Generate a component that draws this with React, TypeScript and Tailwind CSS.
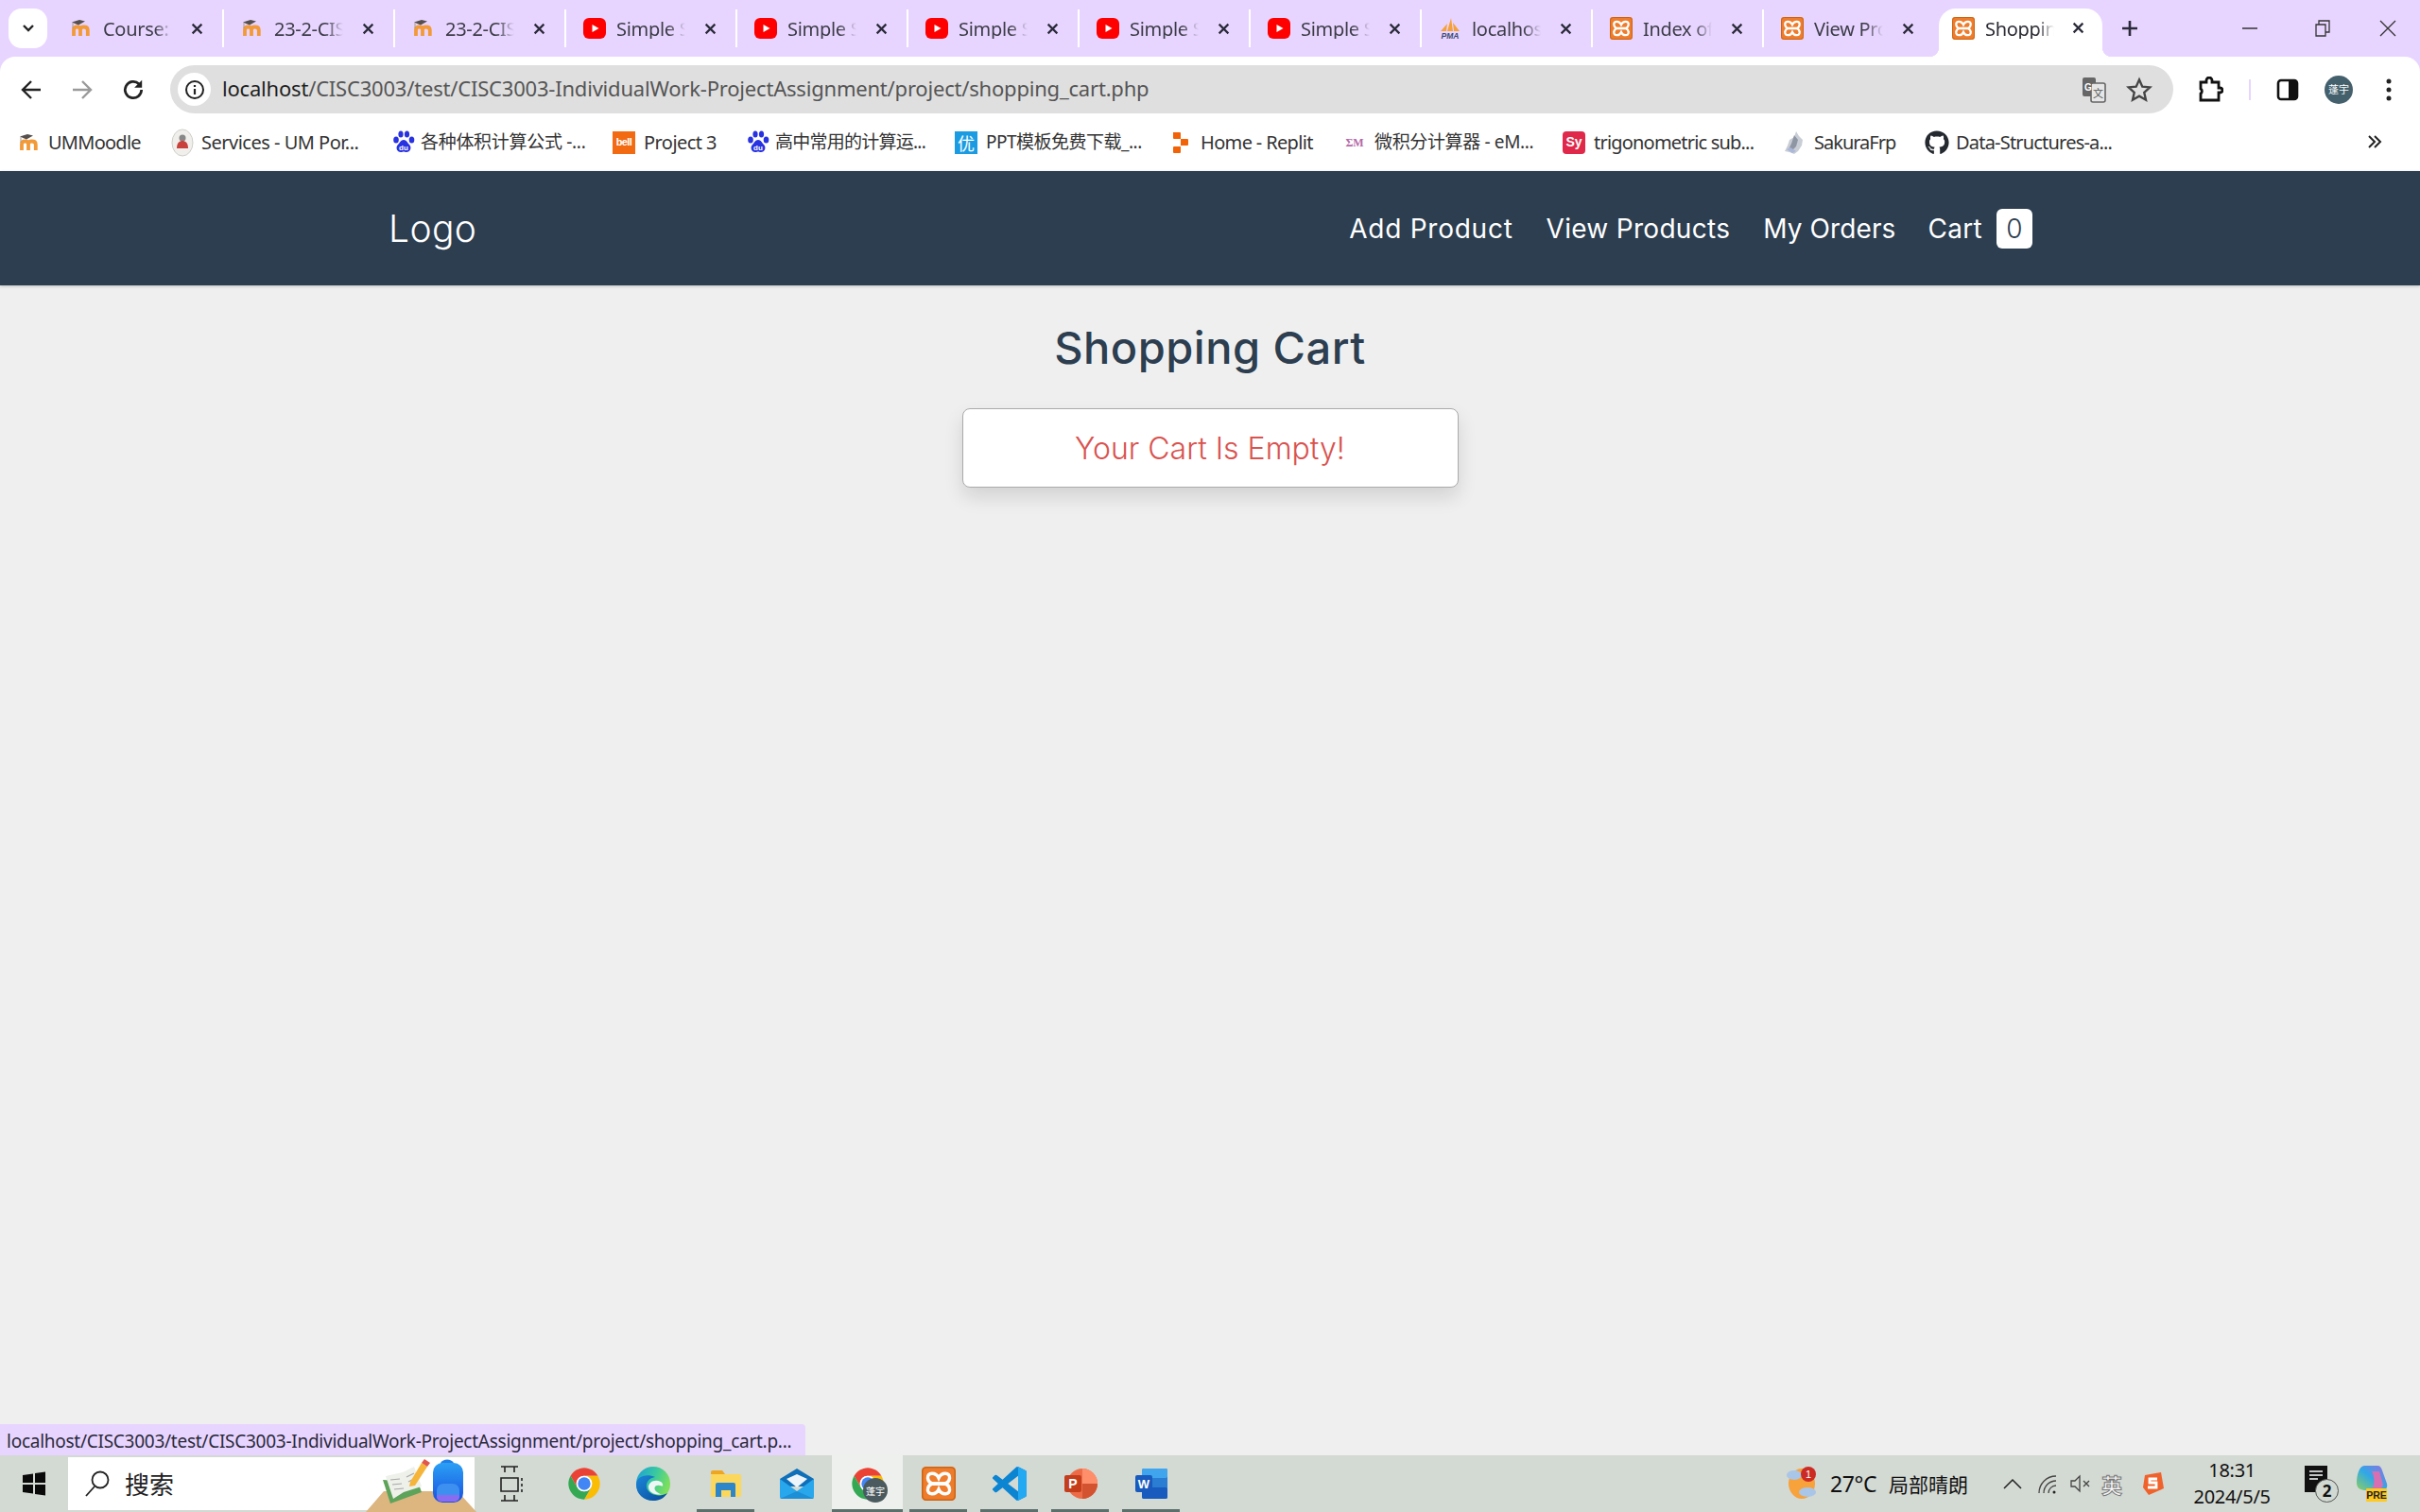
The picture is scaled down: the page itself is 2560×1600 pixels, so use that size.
import React from "react";
import { FaGithub } from "react-icons/fa";

const ui = "font-['Noto_Sans','Noto_Sans_CJK_SC',sans-serif]";

function Moodle({ s = 24 }: { s?: number }) {
  return (
    <svg width={s} height={s} viewBox="0 0 24 24" className="shrink-0">
      <path d="M4 20v-6.500c0-2 1-3 3.500-3s3.500 1 3.500 3V20M11 13.500c0-2 1.500-3 3.800-3s4 1 4 3.500V20" fill="none" stroke="#f29a38" strokeWidth="3.800" />
      <path d="M2 5.500l8-2.500 6 1.500-7 4z" fill="#55504e" />
      <path d="M3 6v6" stroke="#a89a90" strokeWidth="1" />
    </svg>
  );
}
function Yt() {
  return (
    <svg width="24" height="24" viewBox="0 0 24 24" className="shrink-0">
      <rect x="0" y="1" width="24" height="22" rx="6" fill="#ff0000" />
      <path d="M9.500 8l7 4-7 4z" fill="#fff" />
    </svg>
  );
}
function Pma() {
  return (
    <svg width="24" height="24" viewBox="0 0 24 24" className="shrink-0">
      <path d="M2 15L9 7l-1 8zM9 15l4-14 2 14zM16 15l-1-9 7 9z" fill="#f5a13a" />
      <text x="12" y="23" textAnchor="middle" fontSize="8.500" fontWeight="700" fontStyle="italic" fill="#3a4a72" fontFamily="Liberation Sans">PMA</text>
    </svg>
  );
}
function Xampp({ s = 24 }: { s?: number }) {
  return (
    <svg width={s} height={s} viewBox="0 0 24 24" className="shrink-0">
      <rect width="24" height="24" rx="3" fill="#ee7c2b" />
      <rect x=".5" y=".5" width="23" height="23" rx="3" fill="none" stroke="#c96516" />
      <path d="M12 8C10 3.500 3.800 4 4.300 8C4.500 10 6 11.500 7.500 12C6 12.500 4.500 14 4.300 16C3.800 20 10 20.500 12 16C14 20.500 20.200 20 19.700 16C19.500 14 18 12.500 16.500 12C18 11.500 19.500 10 19.700 8C20.200 4 14 3.500 12 8Z" fill="none" stroke="#fff" strokeWidth="2.300" />
      <path d="M7.500 12h9" stroke="#fff" strokeWidth="2.600" />
    </svg>
  );
}
function Paw() {
  return (
    <svg width="24" height="26" viewBox="0 0 24 26" className="shrink-0">
      <g fill="#2932e1">
        <ellipse cx="4" cy="10" rx="2.800" ry="3.600" />
        <ellipse cx="9" cy="4" rx="2.600" ry="3.600" />
        <ellipse cx="15.500" cy="4" rx="2.600" ry="3.600" />
        <ellipse cx="20.500" cy="10" rx="2.800" ry="3.600" />
        <path d="M12 10c3 0 4 3 6 5 3 3 1 8-3 8-1.500 0-2-.5-3-.5s-1.500.5-3 .5c-4 0-6-5-3-8 2-2 3-5 6-5z" />
      </g>
      <text x="12" y="21" textAnchor="middle" fontSize="8" fontWeight="700" fill="#fff" fontFamily="Liberation Sans">du</text>
    </svg>
  );
}
function Bell() {
  return (
    <div className="w-6 h-6 shrink-0 bg-[#f26a12] flex items-center justify-center text-white text-[11px] font-bold font-['Liberation_Sans',sans-serif] tracking-tighter">bell</div>
  );
}
function You() {
  return (
    <div className="w-6 h-6 shrink-0 bg-[#1b9ce2] flex items-center justify-center text-white text-[18px] leading-none font-['Noto_Sans_CJK_SC',sans-serif]">优</div>
  );
}
function Replit() {
  return (
    <svg width="21" height="24" viewBox="3 0 21 24" className="shrink-0">
      <path d="M4 1h7a1 1 0 0 1 1 1v6H5a1 1 0 0 1-1-1zM12 8h7a1 1 0 0 1 1 1v5a1 1 0 0 1-1 1h-7zM4 17a1 1 0 0 1 1-1h7v6a1 1 0 0 1-1 1H5a1 1 0 0 1-1-1z" fill="#f26207" />
    </svg>
  );
}
function Em() {
  return (
    <svg width="24" height="24" viewBox="0 0 24 24" className="shrink-0">
      <text x="12" y="16" textAnchor="middle" fontSize="12" fontWeight="700" fill="#b468a8" fontFamily="Liberation Serif">ΣM</text>
    </svg>
  );
}
function Sy() {
  return (
    <div className="w-6 h-6 shrink-0 rounded-[4px] bg-[#e0284a] flex items-center justify-center text-white text-[14px] font-bold font-['Liberation_Sans',sans-serif]">Sy</div>
  );
}
function Sakura() {
  return (
    <svg width="24" height="26" viewBox="0 0 24 26" className="shrink-0">
      <path d="M14 1l3 5 4 4-1 6-4 6-4 3-5-2-5-1 3-6 2-6 5-3z" fill="#c9ced6" />
      <path d="M12 5l4 5-2 7-5 5-3-2 3-6z" fill="#8f96a3" />
      <path d="M4 20l6 4 4-2-6-4z" fill="#aab7d8" />
    </svg>
  );
}
function Service() {
  return (
    <svg width="24" height="30" viewBox="0 0 24 30" className="shrink-0">
      <ellipse cx="12" cy="15" rx="11" ry="14" fill="#f0efec" stroke="#cfcfc9" />
      <circle cx="12" cy="10" r="3.500" fill="#888" />
      <path d="M6 21c0-6 3-8 6-8s6 2 6 8z" fill="#c9413b" />
    </svg>
  );
}
function Chrome({ s = 40 }: { s?: number }) {
  return (
    <svg width={s} height={s} viewBox="0 0 48 48" className="shrink-0">
      <path d="M6.680 14A20 20 0 0 1 41.320 14H24a10 10 0 0 0-8.660 15z" fill="#ea4335" />
      <path d="M24 14H41.320A20 20 0 0 1 24 44L32.660 29A10 10 0 0 0 24 14z" fill="#fbbc04" />
      <path d="M6.680 14L15.340 29A10 10 0 0 0 32.660 29L24 44A20 20 0 0 1 6.680 14z" fill="#34a853" />
      <circle cx="24" cy="24" r="10" fill="#fff" />
      <circle cx="24" cy="24" r="8" fill="#4285f4" />
    </svg>
  );
}
function Edge() {
  return (
    <svg width="38" height="38" viewBox="0 0 38 38" className="shrink-0">
      <defs>
        <linearGradient id="edgeA" x1="0" y1="0" x2="1" y2=".4">
          <stop offset="0" stopColor="#1a9fdc" />
          <stop offset=".55" stopColor="#38c8a0" />
          <stop offset="1" stopColor="#7ce05c" />
        </linearGradient>
        <linearGradient id="edgeB" x1="0" y1="0" x2="1" y2="1">
          <stop offset="0" stopColor="#1c86d8" />
          <stop offset="1" stopColor="#0a4a9c" />
        </linearGradient>
      </defs>
      <circle cx="19" cy="19" r="18" fill="url(#edgeA)" />
      <path d="M1 20C1 11 12 8 21 12C15 13 11 17 12 23C14 31 26 34 34 29C30 35 25 37 19 37C9 37 1 30 1 20Z" fill="url(#edgeB)" />
      <path d="M27 17C21 14 14 17 14 23C14.500 28 20 31 28 30.500C24 29 20.500 27 20.500 24C20.500 21 24 20 28 21.500C30 22 29.500 18.500 27 17Z" fill="#eef7f5" />
    </svg>
  );
}
function Folder() {
  return (
    <svg width="34" height="30" viewBox="0 0 34 30" className="shrink-0">
      <path d="M1 3a2 2 0 0 1 2-2h10l3 4H1z" fill="#eea620" />
      <rect x="1" y="5" width="32" height="24" rx="1.500" fill="#fbd75b" />
      <path d="M6 29V16a2 2 0 0 1 2-2h17a2 2 0 0 1 2 2v13h-5v-7H12v7z" fill="#2d86c9" />
    </svg>
  );
}
function Mail() {
  return (
    <svg width="38" height="34" viewBox="0 0 38 34" className="shrink-0">
      <path d="M1 12L19 1l18 11v8H1z" fill="#0f6fb8" />
      <path d="M8 12L19 7l11 5-11 9z" fill="#eef5fa" />
      <path d="M1 12l18 13 18-13v19a2 2 0 0 1-2 2H3a2 2 0 0 1-2-2z" fill="#28a7ec" />
      <path d="M1 33l18-8 18 8z" fill="#1c8fd6" />
    </svg>
  );
}
function Vscode() {
  return (
    <svg width="36" height="36" viewBox="0 0 24 24" className="shrink-0">
      <path d="M23.150 2.587L18.210.21a1.494 1.494 0 0 0-1.705.29l-9.460 8.630-4.120-3.128a.999.999 0 0 0-1.276.057L.327 7.261A1 1 0 0 0 .326 8.740L3.899 12 .326 15.260a1 1 0 0 0 .001 1.479L1.650 17.940a.999.999 0 0 0 1.276.057l4.120-3.128 9.460 8.630a1.492 1.492 0 0 0 1.704.29l4.942-2.377A1.500 1.500 0 0 0 24 20.060V3.939a1.500 1.500 0 0 0-.850-1.352zm-5.146 14.861L10.826 12l7.178-5.448v10.896z" fill="#0b84d2" />
      <path d="M16.505.5a1.494 1.494 0 0 1 1.705-.29l4.940 2.377A1.500 1.500 0 0 1 24 3.939V20.060a1.500 1.500 0 0 1-.850 1.352l-4.942 2.377a1.492 1.492 0 0 1-1.704-.29c.8.400 1.500 0 1.500-1V1.500c0-1-.7-1.400-1.500-1z" fill="#23a9f2" />
    </svg>
  );
}
function Ppt() {
  return (
    <svg width="36" height="36" viewBox="0 0 36 36" className="shrink-0">
      <circle cx="20" cy="18" r="16" fill="#ed6c47" />
      <path d="M20 2a16 16 0 0 1 16 16H20z" fill="#ff8f6b" />
      <path d="M20 18h16a16 16 0 0 1-16 16z" fill="#d35230" />
      <rect x="1" y="9" width="18" height="18" rx="2" fill="#c43e1c" />
      <text x="10" y="23" textAnchor="middle" fontSize="14" fontWeight="700" fill="#fff" fontFamily="Liberation Sans">P</text>
    </svg>
  );
}
function Word() {
  return (
    <svg width="36" height="36" viewBox="0 0 36 36" className="shrink-0">
      <rect x="8" y="2" width="27" height="32" rx="2" fill="#2b7cd3" />
      <rect x="8" y="2" width="27" height="10" rx="2" fill="#41a5ee" />
      <rect x="8" y="22" width="27" height="12" rx="2" fill="#185abd" />
      <rect x="1" y="9" width="18" height="18" rx="2" fill="#185abd" />
      <text x="10" y="23" textAnchor="middle" fontSize="13" fontWeight="700" fill="#fff" fontFamily="Liberation Sans">W</text>
    </svg>
  );
}
function Weather() {
  return (
    <svg width="40" height="36" viewBox="0 0 40 36" className="shrink-0">
      <path d="M4 18a14 16 0 0 1 14-16c8 0 14 7 14 16s-6 16-14 16S4 26 4 18z" fill="#f7a23b" />
      <g fill="#a9c6e8">
        <ellipse cx="10" cy="9" rx="8" ry="5" />
        <ellipse cx="24" cy="27" rx="9" ry="5" />
      </g>
      <circle cx="25" cy="8" r="8" fill="#cb2b22" />
      <text x="25" y="12" textAnchor="middle" fontSize="11" fill="#fff" fontFamily="Liberation Sans">1</text>
    </svg>
  );
}
function Copilot() {
  return (
    <svg width="36" height="42" viewBox="0 0 36 42" className="shrink-0">
      <defs>
        <linearGradient id="copA" x1="0" y1="1" x2="1" y2="0">
          <stop offset="0" stopColor="#8ccf5f" />
          <stop offset=".5" stopColor="#2fa8e8" />
          <stop offset="1" stopColor="#9a6be0" />
        </linearGradient>
      </defs>
      <path d="M10 2h14c3 0 4 2 5 5l5 14c1 4-1 7-5 7H12C6 28 2 26 2 20 2 12 5 2 10 2z" fill="url(#copA)" />
      <path d="M18 8h8l4 14c0 3-3 5-6 5h-6c3-4 3-14 0-19z" fill="#d76fb3" />
      <rect x="12" y="26" width="22" height="14" rx="1" fill="#ffc91f" />
      <text x="23" y="37" textAnchor="middle" fontSize="10.500" fontWeight="700" fill="#222" fontFamily="Liberation Sans">PRE</text>
    </svg>
  );
}

const X = () => (
  <svg width="13" height="13" viewBox="0 0 12 12" className="shrink-0">
    <path d="M1.500 1.500l9 9M10.500 1.500l-9 9" stroke="#2a2a3a" strokeWidth="2" />
  </svg>
);

function Tab({ icon, title }: { icon: React.ReactNode; title: string }) {
  return (
    <div className="w-[181px] h-[40px] shrink-0 flex items-center pl-[18px] pr-[20px] border-r-2 border-white">
      {icon}
      <span className="ml-[11px] pt-[2px] w-[73px] overflow-hidden whitespace-nowrap text-[20px] leading-none text-[#3c3c48] tracking-[-0.3px] [mask-image:linear-gradient(to_right,black_75%,transparent)]">{title}</span>
      <span className="ml-auto"><X /></span>
    </div>
  );
}

function Mark({ icon, text, cls, tcls }: { icon: React.ReactNode; text: string; cls: string; tcls?: string }) {
  return (
    <div className={`flex items-center gap-[9px] shrink-0 ${cls}`}>
      {icon}
      <span className={`leading-none text-[#333] whitespace-nowrap ${tcls ?? "text-[20px] tracking-[-0.55px]"}`}>{text}</span>
    </div>
  );
}

function Slot({ children, under }: { children: React.ReactNode; under?: boolean }) {
  return (
    <div className="w-[75px] h-full relative flex items-center justify-center shrink-0">
      {children}
      {under && <span className="absolute bottom-0 left-[7px] right-[7px] h-[3px] bg-[#5d6f6b]" />}
    </div>
  );
}

export default function App() {
  return (
    <div className={`w-[2560px] h-[1600px] flex flex-col overflow-hidden bg-[#efefef] ${ui}`}>
      {/* tab strip */}
      <div className="h-[60px] bg-[#e8d5ff] flex items-start shrink-0">
        <div className="w-[56px] pl-[9px] pt-[9px] shrink-0">
          <div className="w-[41px] h-[42px] bg-white rounded-[14px] flex items-center justify-center">
            <svg width="14" height="10" viewBox="0 0 14 10"><path d="M2 2l5 5 5-5" fill="none" stroke="#222" strokeWidth="2.400" /></svg>
          </div>
        </div>
        <div className="flex items-center h-[60px]">
          <Tab icon={<Moodle />} title="Course: 2" />
          <Tab icon={<Moodle />} title="23-2-CISC" />
          <Tab icon={<Moodle />} title="23-2-CISC" />
          <Tab icon={<Yt />} title="Simple Sh" />
          <Tab icon={<Yt />} title="Simple Sh" />
          <Tab icon={<Yt />} title="Simple Sh" />
          <Tab icon={<Yt />} title="Simple Sh" />
          <Tab icon={<Yt />} title="Simple Sh" />
          <Tab icon={<Pma />} title="localhost" />
          <Tab icon={<Xampp />} title="Index of /" />
          <div className="w-[185px] h-[40px] shrink-0 flex items-center pl-[18px]">
            <Xampp />
            <span className="ml-[11px] pt-[2px] w-[73px] overflow-hidden whitespace-nowrap text-[20px] leading-none text-[#3c3c48] tracking-[-0.3px] [mask-image:linear-gradient(to_right,black_75%,transparent)]">View Prod</span>
            <span className="ml-[20px]"><X /></span>
          </div>
          <div className="relative w-[173px] h-[51px] mt-[9px] shrink-0 bg-white rounded-t-[18px] flex items-center pl-[14px] pb-[10px]">
            <span className="absolute bottom-0 -left-[10px] w-[10px] h-[10px] bg-[radial-gradient(circle_at_0_0,transparent_10px,white_10.500px)]" />
            <span className="absolute bottom-0 -right-[10px] w-[10px] h-[10px] bg-[radial-gradient(circle_at_100%_0,transparent_10px,white_10.500px)]" />
            <Xampp />
            <span className="ml-[11px] pt-[2px] w-[73px] overflow-hidden whitespace-nowrap text-[20px] leading-none text-[#2b2b33] tracking-[-0.3px] [mask-image:linear-gradient(to_right,black_75%,transparent)]">Shopping</span>
            <span className="ml-[19px]"><X /></span>
          </div>
          <svg width="20" height="20" viewBox="0 0 20 20" className="ml-[19px]"><path d="M10 2v16M2 10h16" stroke="#2a2a3a" strokeWidth="2.600" /></svg>
        </div>
        <div className="ml-auto h-[40px] mt-[10px] flex items-center text-[#333]">
          <svg width="16" height="2" viewBox="0 0 16 2"><path d="M0 1h16" stroke="#333" strokeWidth="1.500" /></svg>
          <svg width="16" height="18" viewBox="0 0 16 18" className="ml-[61px]"><path d="M1 5h10v12H1zM4 5V1h11v12h-4" fill="none" stroke="#333" strokeWidth="1.300" /></svg>
          <svg width="18" height="18" viewBox="0 0 18 18" className="ml-[52px] mr-[25px]"><path d="M1 1l16 16M17 1L1 17" stroke="#333" strokeWidth="1.300" /></svg>
        </div>
      </div>

      {/* toolbar */}
      <div className="h-[60px] bg-[#e8d5ff] shrink-0">
        <div className="h-full bg-white rounded-t-[16px] flex items-start pt-[9px]">
          <div className="w-[180px] h-[51px] flex items-center shrink-0">
            <svg width="24" height="24" viewBox="0 0 24 24" className="ml-[21px]"><path d="M22 12H4M12 3l-9 9 9 9" fill="none" stroke="#222" strokeWidth="2.400" /></svg>
            <svg width="24" height="24" viewBox="0 0 24 24" className="ml-[30px]"><path d="M2 12h18M12 3l9 9-9 9" fill="none" stroke="#9a9a9a" strokeWidth="2.400" /></svg>
            <svg width="26" height="26" viewBox="0 0 24 24" className="ml-[29px]"><path d="M20 12a8 8 0 1 1-2.500-5.800" fill="none" stroke="#222" strokeWidth="2.500" /><path d="M20.500 2.500v7.500H13z" fill="#222" /></svg>
          </div>
          <div className="w-[2119px] h-[51px] bg-[#dfdfdf] rounded-full flex items-center shrink-0">
            <div className="ml-[8px] w-[35px] h-[35px] bg-white rounded-full flex items-center justify-center shrink-0">
              <svg width="22" height="22" viewBox="0 0 22 22"><circle cx="11" cy="11" r="9" fill="none" stroke="#222" strokeWidth="2" /><path d="M11 10v6M11 6v2" stroke="#222" strokeWidth="2.200" /></svg>
            </div>
            <div className="ml-[12px] pb-[3px] text-[22px] leading-none whitespace-nowrap tracking-[-0.2px] text-[#555]"><span className="text-[#1f1f1f]">localhost</span>/CISC3003/test/CISC3003-IndividualWork-ProjectAssignment/project/shopping_cart.php</div>
            <svg width="26" height="28" viewBox="0 0 26 28" className="ml-auto shrink-0">
              <rect x="1" y="1" width="14" height="20" rx="2" fill="#666" />
              <rect x="10" y="7" width="15" height="20" rx="2" fill="#e6e6e6" stroke="#666" strokeWidth="1.600" />
              <text x="7" y="15" textAnchor="middle" fontSize="10" fontWeight="700" fill="#fff" fontFamily="Liberation Sans">G</text>
              <text x="17.500" y="22" textAnchor="middle" fontSize="11" fill="#555" fontFamily="Noto Sans CJK SC">文</text>
            </svg>
            <svg width="28" height="28" viewBox="0 0 24 24" className="ml-[21px] mr-[22px] shrink-0"><path d="M12 2.800l2.800 6.300 6.900.7-5.200 4.600 1.500 6.800-6-3.500-6 3.500 1.500-6.800-5.200-4.600 6.900-.7z" fill="none" stroke="#444" strokeWidth="2" /></svg>
          </div>
          <div className="h-[51px] flex items-center flex-1">
            <svg width="26" height="28" viewBox="0 0 26 28" className="ml-[27px] shrink-0"><path d="M2 6h6V4a3 3 0 0 1 6 0v2h7v6h1.500a2.500 2.500 0 0 1 0 5H21v8H2v-7a3 3 0 0 0 0-5z" fill="none" stroke="#111" strokeWidth="2.800" /></svg>
            <span className="ml-[27px] w-[2px] h-[22px] bg-[#e8d5ff] shrink-0" />
            <svg width="24" height="24" viewBox="0 0 24 24" className="ml-[27px] shrink-0"><rect x="2" y="2" width="20" height="20" rx="3" fill="none" stroke="#111" strokeWidth="2.600" /><rect x="13" y="2" width="9" height="20" fill="#111" /></svg>
            <div className="ml-[27px] w-[30px] h-[30px] rounded-full bg-[#44606c] text-white text-[11px] flex items-center justify-center font-['Noto_Sans_CJK_SC',sans-serif] shrink-0">蓬宇</div>
            <svg width="6" height="24" viewBox="0 0 6 24" className="ml-[35px] shrink-0"><circle cx="3" cy="3" r="2.500" fill="#222" /><circle cx="3" cy="12" r="2.500" fill="#222" /><circle cx="3" cy="21" r="2.500" fill="#222" /></svg>
          </div>
        </div>
      </div>

      {/* bookmarks */}
      <div className="h-[61px] bg-white flex items-center shrink-0 pl-[19px] font-['Noto_Sans','Noto_Sans_CJK_SC',sans-serif]">
        <Mark cls="w-[162px]" icon={<Moodle />} text="UMMoodle" tcls="text-[20px] tracking-[-0.75px] -ml-[1px]" />
        <Mark cls="w-[234px]" icon={<Service />} text="Services - UM Por..." tcls="text-[20px] tracking-[-0.5px] -ml-[1px]" />
        <Mark cls="w-[233px]" icon={<Paw />} text="各种体积计算公式 -..." tcls="text-[19px] tracking-[-0.3px] -ml-[3px]" />
        <Mark cls="w-[142px]" icon={<Bell />} text="Project 3" />
        <Mark cls="w-[220px]" icon={<Paw />} text="高中常用的计算运..." tcls="text-[19px] tracking-[-0.75px] -ml-[3px]" />
        <Mark cls="w-[230px]" icon={<You />} text="PPT模板免费下载_..." tcls="text-[19px] tracking-[-0.5px]" />
        <Mark cls="w-[181px]" icon={<Replit />} text="Home - Replit" tcls="text-[20px] tracking-[-0.65px]" />
        <Mark cls="w-[232px]" icon={<Em />} text="微积分计算器 - eM..." tcls="text-[19px] tracking-[-0.35px]" />
        <Mark cls="w-[233px]" icon={<Sy />} text="trigonometric sub..." tcls="text-[20px] tracking-[-0.8px]" />
        <Mark cls="w-[150px]" icon={<Sakura />} text="SakuraFrp" tcls="text-[20px] tracking-[-1px]" />
        <Mark cls="w-[240px]" icon={<FaGithub size={26} color="#24292f" />} text="Data-Structures-a..." tcls="text-[20px] tracking-[-0.8px] -ml-[2px]" />
        <svg width="16" height="14" viewBox="0 0 16 14" className="ml-[228px] mb-[2px]"><path d="M2 1l6 6-6 6M8 1l6 6-6 6" fill="none" stroke="#222" strokeWidth="2" /></svg>
      </div>

      {/* nav */}
      <nav className="h-[121px] bg-[#2c3e50] shadow-[0_1px_3px_rgba(0,0,0,0.2)] shrink-0 font-['Inter',sans-serif] text-white">
        <div className="w-[1740px] h-full mx-auto flex items-center justify-between pl-[1px]">
          <div className="text-[39px] font-light tracking-[0.4px] pt-[1px]">Logo</div>
          <div className="flex items-center text-[28px] font-normal">
            <span className="tracking-[0.75px] pt-[1px]">Add Product</span>
            <span className="ml-[35px] tracking-[0.3px] pt-[1px]">View Products</span>
            <span className="ml-[35px] tracking-[0.1px] pt-[1px]">My Orders</span>
            <span className="ml-[34px] tracking-[0.3px] pt-[1px]">Cart</span>
            <span className="ml-[15px] w-[38px] h-[42px] bg-white rounded-[6px] text-[#2c3e50] font-light flex items-center justify-center">0</span>
          </div>
        </div>
      </nav>

      {/* page */}
      <main className="flex-1 relative flex flex-col items-center font-['Inter',sans-serif]">
        <h1 className="mt-[39px] text-[47px] leading-[54px] font-medium text-[#2c3e50] tracking-[0.5px]">Shopping Cart</h1>
        <div className="mt-[37px] w-[525px] h-[84px] bg-white border border-[#aaaaaa] rounded-[8px] shadow-[0_10px_20px_rgba(0,0,0,0.12)] flex items-center justify-center text-[32px] font-light text-[#d9534f] pt-[2px]">
          Your Cart Is Empty!
        </div>
        <div className={`absolute left-0 bottom-0 w-[852px] h-[33px] bg-[#e8d5ff] rounded-tr-[4px] pl-[7px] pt-[4px] flex items-center text-[19px] leading-none text-[#2a2a3a] whitespace-nowrap tracking-[-0.26px] ${ui}`}>
          localhost/CISC3003/test/CISC3003-IndividualWork-ProjectAssignment/project/shopping_cart.p...
        </div>
      </main>

      {/* taskbar */}
      <footer className="h-[60px] bg-[#d3d9d3] flex items-stretch shrink-0">
        <div className="w-[72px] flex items-center justify-center shrink-0">
          <svg width="26" height="26" viewBox="0 0 26 26"><path d="M1 4l11-1.600V12H1zM14 2.100L25 .5V12H14zM1 14h11v9.600L1 22zM14 14h11v11.500l-11-1.600z" fill="#0a0a0a" /></svg>
        </div>
        <div className="w-[430px] my-[2px] ml-0 bg-white flex items-center shrink-0 relative">
          <svg width="28" height="30" viewBox="0 0 28 30" className="ml-[17px]"><circle cx="17" cy="11" r="8.500" fill="none" stroke="#222" strokeWidth="1.800" /><path d="M11 18L2 28" stroke="#222" strokeWidth="1.800" /></svg>
          <span className="ml-[15px] text-[26px] leading-none text-[#222] font-['Noto_Sans_CJK_SC',sans-serif]">搜索</span>
          <svg width="120" height="60" viewBox="0 0 120 60" className="absolute right-[-2px] bottom-[-2px]">
            <defs>
              <linearGradient id="bagA" x1="0" y1="0" x2="0" y2="1">
                <stop offset="0" stopColor="#2aa0f5" />
                <stop offset="1" stopColor="#1a50e0" />
              </linearGradient>
            </defs>
            <path d="M3 60L22 38H100L120 60z" fill="#dcb57f" />
            <path d="M21 26L29 51 62 39 58 28z" fill="#5ea35a" />
            <path d="M24 22L32 46 43 39 62 33 54 12 42 18z" fill="#eef0ea" />
            <path d="M29 26l10-1M31 31l10-1M33 36l10-1M46 23l8-4M48 28l8-4" stroke="#a8a8a8" strokeWidth="1.200" />
            <path d="M50 28L62 8 68 12 55 32 49 33z" fill="#f5b53a" />
            <path d="M62 8L65 4 71 8 68 12z" fill="#e2574c" />
            <path d="M82 8a8 7 0 0 1 14 0v3H82z" fill="#1f7fe8" />
            <rect x="74" y="8" width="32" height="42" rx="10" fill="url(#bagA)" />
            <rect x="78" y="30" width="24" height="19" rx="7" fill="#3d8ff0" />
            <path d="M78 42h24v2a5 5 0 0 1-5 5H83a5 5 0 0 1-5-5z" fill="#8a6cf0" />
          </svg>
        </div>
        <div className="w-[78px] flex items-center justify-center shrink-0">
          <svg width="24" height="40" viewBox="0 0 24 40"><path d="M1 2h18M5 2v6M15 2v6M1 14h18v14H1zM1 38h18M5 32v6M15 32v6M23 14v3M23 20v3M23 26v3" fill="none" stroke="#222" strokeWidth="1.600" /></svg>
        </div>
        <Slot><Chrome /></Slot>
        <Slot><span className="mr-[3px]"><Edge /></span></Slot>
        <Slot under><Folder /></Slot>
        <Slot><Mail /></Slot>
        <div className="w-[75px] h-full relative flex items-center justify-center shrink-0 bg-[#edf0ed]">
          <Chrome />
          <span className="absolute left-[33px] top-[24px] w-[26px] h-[26px] rounded-full bg-[#4a5a5e] text-white text-[10px] flex items-center justify-center font-['Noto_Sans_CJK_SC',sans-serif]">蓬宇</span>
          <span className="absolute bottom-0 left-0 right-0 h-[3px] bg-[#5d6f6b]" />
        </div>
        <Slot under><Xampp s={36} /></Slot>
        <Slot under><Vscode /></Slot>
        <Slot under><Ppt /></Slot>
        <Slot under><Word /></Slot>
        <div className="flex-1 flex items-center text-[#111]">
          <span className="ml-[633px] shrink-0"><Weather /></span>
          <span className="ml-[8px] text-[23px] leading-none whitespace-nowrap tracking-[-0.4px]">27°C</span>
          <span className="ml-[13px] text-[21px] leading-none whitespace-nowrap font-['Noto_Sans_CJK_SC',sans-serif]">局部晴朗</span>
          <svg width="20" height="12" viewBox="0 0 20 12" className="ml-[37px] shrink-0"><path d="M1 11l9-9 9 9" fill="none" stroke="#222" strokeWidth="1.500" /></svg>
          <svg width="20" height="22" viewBox="0 0 20 22" className="ml-[17px] shrink-0"><path d="M1 21a18 18 0 0 1 18-18M6 21a13 13 0 0 1 13-13M11 21a8 8 0 0 1 8-8" fill="none" stroke="#444" strokeWidth="1.300" /><circle cx="17" cy="20" r="1.500" fill="#222" /></svg>
          <svg width="22" height="22" viewBox="0 0 22 22" className="ml-[14px] shrink-0"><path d="M1 8h4l5-5v16l-5-5H1zM14 8l6 6M20 8l-6 6" fill="none" stroke="#444" strokeWidth="1.300" /></svg>
          <span className="ml-[11px] text-[22px] leading-none text-[#f5f5f5] font-bold font-['Noto_Sans_CJK_SC',sans-serif] [-webkit-text-stroke:1px_#777] shrink-0">英</span>
          <svg width="24" height="26" viewBox="0 0 24 26" className="ml-[20px] shrink-0"><path d="M4 4l17-3 3 17-16 7-6-8z" fill="#f0622b" /><path d="M17 8H9v4h7v5H7" fill="none" stroke="#fff" strokeWidth="2.800" /></svg>
          <div className="ml-[30px] w-[84px] flex flex-col items-center text-[20px] leading-[28px] whitespace-nowrap shrink-0 tracking-[-0.3px] text-[#111]">
            <span>18:31</span>
            <span>2024/5/5</span>
          </div>
          <div className="ml-[35px] relative w-[24px] h-[28px] bg-[#111] shrink-0 mb-[10px]">
            <svg width="14" height="12" viewBox="0 0 14 12" className="absolute left-[5px] top-[5px]"><path d="M0 1h14M0 5h14M0 9h9" stroke="#fff" strokeWidth="1.300" /></svg>
            <span className="absolute left-[11px] top-[14px] w-[25px] h-[25px] rounded-full bg-[#d2d9d2] border border-[#555] flex items-center justify-center text-[17px] font-bold leading-none text-[#111]">2</span>
          </div>
          <span className="ml-[29px] shrink-0"><Copilot /></span>
        </div>
      </footer>
    </div>
  );
}
